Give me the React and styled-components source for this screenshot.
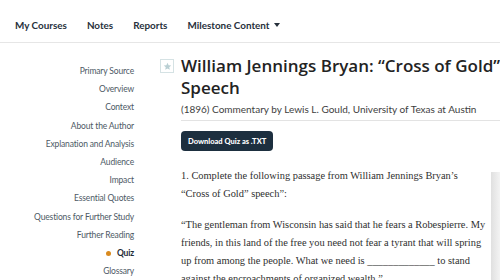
import React from "react"
import styled, { createGlobalStyle } from "styled-components"

const GlobalStyle = createGlobalStyle`
  html, body {
    margin: 0;
    padding: 0;
    background: #fff;
    overflow: hidden;
  }
  body {
    width: 500px;
    height: 280px;
  }
`

const sections = [
  "Primary Source",
  "Overview",
  "Context",
  "About the Author",
  "Explanation and Analysis",
  "Audience",
  "Impact",
  "Essential Quotes",
  "Questions for Further Study",
  "Further Reading",
  "Quiz",
  "Glossary",
]

const App = () => {
  return (
    <Page>
      <GlobalStyle />
      <TopNav>
        <NavItem>My Courses</NavItem>
        <NavItem>Notes</NavItem>
        <NavItem>Reports</NavItem>
        <NavItem>
          Milestone Content <Caret />
        </NavItem>
      </TopNav>
      <Body>
        <SideNav>
          {sections.map(s => (
            <SideItem key={s} active={s === "Quiz"}>
              {s}
            </SideItem>
          ))}
        </SideNav>
        <Main>
          <TitleRow>
            <StarBox>
              <svg width="9" height="9" viewBox="0 0 24 24">
                <path
                  d="M12 2l2.9 6.6 7.1.6-5.4 4.7 1.6 7L12 17.2 5.8 20.9l1.6-7L2 9.2l7.1-.6z"
                  fill="#b9cfd3"
                />
              </svg>
            </StarBox>
            <Title>William Jennings Bryan: “Cross of Gold” Speech</Title>
          </TitleRow>
          <Indented>
            <Byline>(1896) Commentary by Lewis L. Gould, University of Texas at Austin</Byline>
            <Divider />
            <DownloadButton>Download Quiz as .TXT</DownloadButton>
            <Prompt>
              1. Complete the following passage from William Jennings Bryan’s
              “Cross of Gold” speech”:
            </Prompt>
            <Passage>
              “The gentleman from Wisconsin has said that he fears a Robespierre. My
              friends, in this land of the free you need not fear a tyrant that will spring
              up from among the people. What we need is _____________ to stand
              against the encroachments of organized wealth.”
            </Passage>
          </Indented>
        </Main>
      </Body>
      <EdgePanel />
    </Page>
  )
}

const Page = styled.div`
  width: 500px;
  height: 280px;
  overflow: hidden;
  position: relative;
`

const TopNav = styled.nav`
  display: flex;
  align-items: center;
  gap: 20px;
  height: 43px;
  padding: 0 0 0 15px;
  border-bottom: 1px solid #e6e6e6;
  box-sizing: border-box;
`

const NavItem = styled.div`
  font-family: "Lato", sans-serif;
  font-weight: 700;
  font-size: 9.9px;
  color: #27313c;
  display: flex;
  align-items: center;
  gap: 4px;
  padding-top: 7px;
`

const Caret = styled.span`
  width: 0;
  height: 0;
  border-left: 3.5px solid transparent;
  border-right: 3.5px solid transparent;
  border-top: 4px solid #27313c;
`

const Body = styled.div`
  display: flex;
`

const SideNav = styled.ul`
  list-style: none;
  margin: 0;
  padding: 19px 0 0;
  width: 134px;
  flex-shrink: 0;
  display: flex;
  flex-direction: column;
  align-items: flex-end;
`

const SideItem = styled.li`
  font-family: "Lato", sans-serif;
  font-size: 8.5px;
  letter-spacing: -0.15px;
  line-height: 18.2px;
  color: ${p => (p.active ? "#1e2a36" : "#4d5965")};
  font-weight: ${p => (p.active ? 700 : 400)};
  display: flex;
  align-items: center;
  gap: 6px;

  &::before {
    content: "";
    display: ${p => (p.active ? "block" : "none")};
    width: 5px;
    height: 5px;
    border-radius: 50%;
    background: #d98a1e;
  }
`

const Main = styled.main`
  flex: 1;
  padding: 12px 0 0 26px;
  min-width: 0;
`

const TitleRow = styled.div`
  display: flex;
  align-items: flex-start;
  gap: 7px;
`

const StarBox = styled.div`
  box-sizing: border-box;
  width: 14px;
  height: 14px;
  flex-shrink: 0;
  margin-top: 4px;
  border: 1px solid #d5e2e4;
  display: flex;
  align-items: center;
  justify-content: center;
`

const Title = styled.h1`
  margin: 0;
  font-family: "Open Sans", sans-serif;
  font-weight: 600;
  font-size: 17px;
  line-height: 22px;
  color: #232323;
`

const Indented = styled.div`
  padding-left: 21px;
`

const Byline = styled.div`
  margin-top: 4px;
  font-family: "Lato", sans-serif;
  font-size: 10px;
  line-height: 13px;
  color: #3e3e3e;
`

const Divider = styled.hr`
  margin: 4px 0 0;
  border: 0;
  border-top: 1px solid #e3e3e3;
`

const DownloadButton = styled.button`
  margin-top: 10px;
  background: #1d2f3f;
  color: #fff;
  border: 0;
  border-radius: 4px;
  height: 20px;
  padding: 0 7px;
  font-family: "Lato", sans-serif;
  font-weight: 900;
  font-size: 7.5px;
`

const Passage = styled.p`
  margin: 13px 0 0;
  width: 309px;
  font-family: "Liberation Serif", serif;
  font-size: 10.4px;
  line-height: 18px;
  color: #2f2f2f;
`

const Prompt = styled(Passage)`
  margin-top: 16px;
  width: 298px;
`

const EdgePanel = styled.div`
  position: absolute;
  right: 0;
  top: 172px;
  width: 9px;
  height: 120px;
  background: linear-gradient(90deg, #e0e0e0, #f3f3f3);
`

export default App
